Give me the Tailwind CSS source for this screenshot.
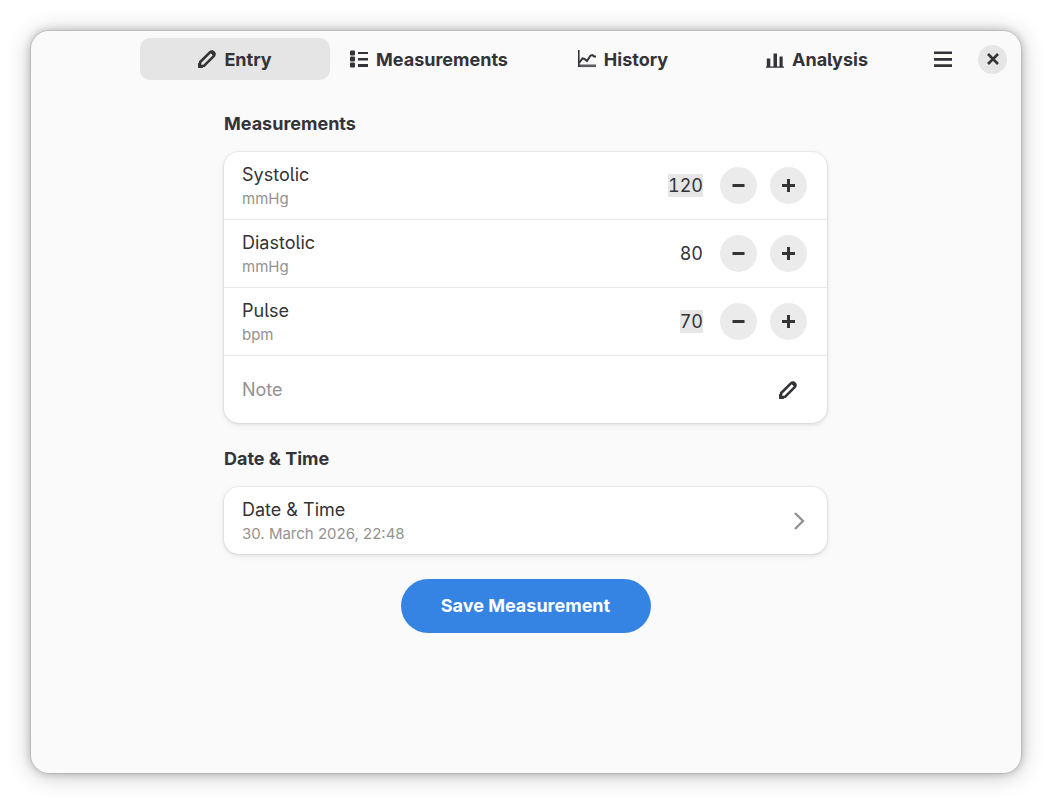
<!DOCTYPE html>
<html lang="en">
<head>
    <meta charset="utf-8">
    <meta name="viewport" content="width=device-width, initial-scale=1">
    <title>Entry</title>
    <script src="https://cdn.jsdelivr.net/npm/@tailwindcss/browser@4"></script>
</head>
<body class="min-h-screen flex p-[31px] bg-white font-['Inter',sans-serif] text-lg leading-6 text-[#333338] [font-feature-settings:'cv05']">
    <div class="flex-1 flex flex-col rounded-[18px] bg-[#fafafa] shadow-[0_0_0_1px_rgba(0,0,0,0.08),0_0_9px_rgba(0,0,0,0.24),0_2px_24px_rgba(0,0,0,0.24)]">
        <!-- Header bar -->
        <header class="flex items-center pt-[7px] pl-[109px] pr-[14px]">
            <nav class="flex-1 flex gap-1 font-bold">
                <button type="button" class="flex-1 h-[42px] flex items-center justify-center gap-2 rounded-[10px] bg-[#e5e5e5]">
                    <svg class="size-[18px]" viewBox="0 0 18 18" fill="none" stroke="currentColor" stroke-width="2.600" stroke-linejoin="round"><path d="M1.600 16.400 2.200 12 11.900 2.300a2.600 2.600 0 0 1 3.800 3.800L6 15.800z"/><path d="M.5 17.500v-4l4 4zM12 2l4 4 1-3-2-2z" fill="currentColor" stroke-width="1"/></svg>
                    <span class="pt-0.5">Entry</span>
                </button>
                <button type="button" class="flex-1 h-[42px] flex items-center justify-center gap-2 rounded-[10px]">
                    <svg class="size-[18px]" viewBox="0 0 18 18" fill="currentColor"><rect width="5" height="5" y="0.500" rx="1"/><rect width="5" height="5" y="6.500" rx="1"/><rect width="5" height="5" y="12.500" rx="1"/><path d="M8 2h10v2H8zM8 8h10v2.500H8zM8 14h10v3H8z"/></svg>
                    <span class="pt-0.5">Measurements</span>
                </button>
                <button type="button" class="flex-1 h-[42px] flex items-center justify-center gap-2 rounded-[10px]">
                    <svg class="size-[18px]" viewBox="0 0 18 18" fill="none" stroke="currentColor"><path d="M.8 0v17" stroke-width="1.600"/><path d="M0 15.800h18" stroke-width="2.600" opacity=".8"/><path d="m1 13 3.500-4.500 2 .5L9 11l3.500-5.500 2-.5 1.500 1.500h2" stroke-width="2"/></svg>
                    <span class="pt-0.5">History</span>
                </button>
                <button type="button" class="flex-1 h-[42px] flex items-center justify-center gap-2 rounded-[10px]">
                    <svg class="size-[18px]" viewBox="0 0 18 18" fill="currentColor"><path d="M0 16.500h18v1.200H0zM.8 8.500h3.500v8H.8zM7.500 3.500H11v13H7.500zM13.500 6.500h3.200v10h-3.200z"/></svg>
                    <span class="pt-0.5">Analysis</span>
                </button>
            </nav>
            <button type="button" aria-label="Main menu" class="ml-[22px] size-[18px]">
                <svg viewBox="0 0 18 18" fill="currentColor"><path d="M0 1.500h18V4H0zM0 8h18v2.800H0zM0 14.300h18V17H0z"/></svg>
            </button>
            <button type="button" aria-label="Close" class="ml-[26px] size-[29px] flex items-center justify-center rounded-full bg-[#e6e6e6]">
                <svg class="size-3" viewBox="0 0 12 12" fill="none" stroke="currentColor" stroke-width="2.600"><path d="m1 1 10 10M11 1 1 11"/></svg>
            </button>
        </header>

        <main class="w-full max-w-[604px] mx-auto pt-8 pb-8 pr-px">
            <h2 class="font-bold">Measurements</h2>
            <div class="mt-4 rounded-[15px] bg-white divide-y divide-[#ebebeb] shadow-[0_0_0_1px_rgba(0,0,0,0.03),0_1px_3px_1px_rgba(0,0,0,0.07),0_2px_6px_2px_rgba(0,0,0,0.03)]">
                <div class="h-[68px] flex items-center pl-[18px] pr-5">
                    <label for="systolic" class="flex-1 pt-0.5">Systolic<span class="block text-[15px] text-[#929292]">mmHg</span></label>
                    <input id="systolic" type="text" inputmode="numeric" value="120" class="field-sizing-content h-[23px] bg-[#e6e6e6] text-right tabular-nums">
                    <button type="button" aria-label="Decrease systolic" class="ml-[17px] size-[37px] flex items-center justify-center rounded-full bg-[#ebebeb]">
                        <svg class="size-[13px]" viewBox="0 0 13 13" fill="currentColor"><path d="M.5 5h12v3H.5z"/></svg>
                    </button>
                    <button type="button" aria-label="Increase systolic" class="ml-[13px] size-[37px] flex items-center justify-center rounded-full bg-[#ebebeb]">
                        <svg class="size-[13px]" viewBox="0 0 13 13" fill="currentColor"><path d="M0 5h13v3H0zM5 0h3v13H5z"/></svg>
                    </button>
                </div>
                <div class="h-[68px] flex items-center pl-[18px] pr-5">
                    <label for="diastolic" class="flex-1 pt-0.5">Diastolic<span class="block text-[15px] text-[#929292]">mmHg</span></label>
                    <input id="diastolic" type="text" inputmode="numeric" value="80" class="field-sizing-content h-[23px] text-right tabular-nums">
                    <button type="button" aria-label="Decrease diastolic" class="ml-[17px] size-[37px] flex items-center justify-center rounded-full bg-[#ebebeb]">
                        <svg class="size-[13px]" viewBox="0 0 13 13" fill="currentColor"><path d="M.5 5h12v3H.5z"/></svg>
                    </button>
                    <button type="button" aria-label="Increase diastolic" class="ml-[13px] size-[37px] flex items-center justify-center rounded-full bg-[#ebebeb]">
                        <svg class="size-[13px]" viewBox="0 0 13 13" fill="currentColor"><path d="M0 5h13v3H0zM5 0h3v13H5z"/></svg>
                    </button>
                </div>
                <div class="h-[68px] flex items-center pl-[18px] pr-5">
                    <label for="pulse" class="flex-1 pt-0.5">Pulse<span class="block text-[15px] text-[#929292]">bpm</span></label>
                    <input id="pulse" type="text" inputmode="numeric" value="70" class="field-sizing-content h-[23px] bg-[#e6e6e6] text-right tabular-nums">
                    <button type="button" aria-label="Decrease pulse" class="ml-[17px] size-[37px] flex items-center justify-center rounded-full bg-[#ebebeb]">
                        <svg class="size-[13px]" viewBox="0 0 13 13" fill="currentColor"><path d="M.5 5h12v3H.5z"/></svg>
                    </button>
                    <button type="button" aria-label="Increase pulse" class="ml-[13px] size-[37px] flex items-center justify-center rounded-full bg-[#ebebeb]">
                        <svg class="size-[13px]" viewBox="0 0 13 13" fill="currentColor"><path d="M0 5h13v3H0zM5 0h3v13H5z"/></svg>
                    </button>
                </div>
                <div class="h-[67px] flex items-center pl-[18px] pr-[30px]">
                    <input id="note" type="text" placeholder="Note" aria-label="Note" class="flex-1 placeholder:text-[#929292]">
                    <label for="note" aria-label="Edit note">
                        <svg class="size-[18px]" viewBox="0 0 18 18" fill="none" stroke="currentColor" stroke-width="2.600" stroke-linejoin="round"><path d="M1.600 16.400 2.200 12 11.900 2.300a2.600 2.600 0 0 1 3.800 3.800L6 15.800z"/><path d="M.5 17.500v-4l4 4zM12 2l4 4 1-3-2-2z" fill="currentColor" stroke-width="1"/></svg>
                    </label>
                </div>
            </div>

            <h2 class="mt-6 font-bold">Date &amp; Time</h2>
            <button type="button" class="mt-4 w-full h-[67px] flex items-center pl-[18px] pr-[22px] rounded-[15px] bg-white text-left shadow-[0_0_0_1px_rgba(0,0,0,0.03),0_1px_3px_1px_rgba(0,0,0,0.07),0_2px_6px_2px_rgba(0,0,0,0.03)]">
                <span class="flex-1 pt-0.5">Date &amp; Time<span class="block text-[15px] text-[#929292]">30. March 2026, 22:48</span></span>
                <svg class="w-3 h-[18px] text-[#929292]" viewBox="0 0 12 18" fill="none" stroke="currentColor" stroke-width="2.400"><path d="m2 1 8 8-8 8"/></svg>
            </button>
            <button type="button" class="mt-[25px] mx-auto w-[250px] h-[54px] block rounded-full bg-[#3584e4] text-white font-bold">Save Measurement</button>
        </main>
    </div>
</body>
</html>
